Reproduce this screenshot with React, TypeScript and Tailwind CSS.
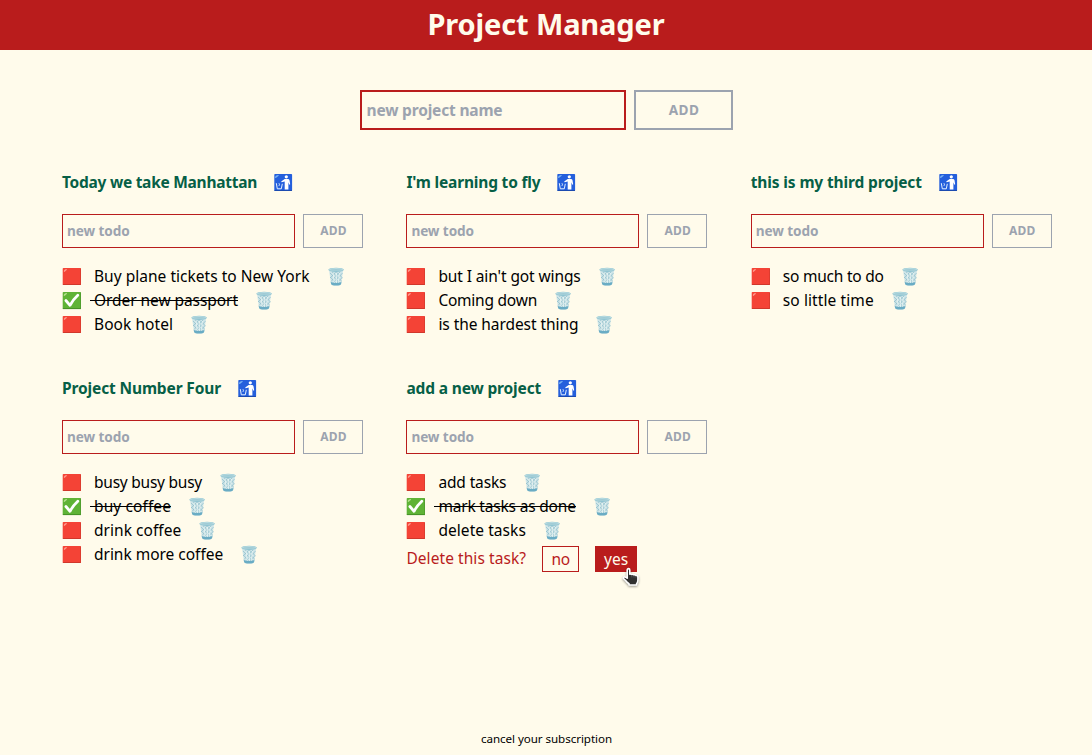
import { useLayoutEffect, useRef } from "react";

type Task = { text: string; width: number; done?: boolean };
type Project = { name: string; width: number; tasks: Task[]; confirm?: boolean };

const projects: Project[] = [
  {
    name: "Today we take Manhattan",
    width: 195,
    tasks: [
      { text: "Buy plane tickets to New York", width: 215.5 },
      { text: "Order new passport", width: 144, done: true },
      { text: "Book hotel", width: 79 },
    ],
  },
  {
    name: "I'm learning to fly",
    width: 134.2,
    tasks: [
      { text: "but I ain't got wings", width: 142.3 },
      { text: "Coming down", width: 98.6 },
      { text: "is the hardest thing", width: 140 },
    ],
  },
  {
    name: "this is my third project",
    width: 171,
    tasks: [
      { text: "so much to do", width: 101 },
      { text: "so little time", width: 91 },
    ],
  },
  {
    name: "Project Number Four",
    width: 159,
    tasks: [
      { text: "busy busy busy", width: 108 },
      { text: "buy coffee", width: 77, done: true },
      { text: "drink coffee", width: 87.3 },
      { text: "drink more coffee", width: 129.2 },
    ],
  },
  {
    name: "add a new project",
    width: 134.7,
    confirm: true,
    tasks: [
      { text: "add tasks", width: 68 },
      { text: "mark tasks as done", width: 137.3, done: true },
      { text: "delete tasks", width: 87.5 },
    ],
  },
];

/** Text whose tracking is adjusted so that it spans the given width. */
function Fit({ text, width, className = "" }: { text: string; width: number; className?: string }) {
  const ref = useRef<HTMLSpanElement>(null);
  useLayoutEffect(() => {
    const el = ref.current;
    if (!el) return;
    el.style.letterSpacing = "0px";
    const natural = el.getBoundingClientRect().width;
    el.style.letterSpacing = `${(width - natural) / text.length}px`;
  }, [text, width]);
  return (
    <span ref={ref} className={`inline-block whitespace-pre ${className}`}>
      {text}
    </span>
  );
}

function RedSquare() {
  return (
    <svg width="20" height="20" viewBox="0 0 20 20" className="mt-0.5 shrink-0">
      <rect x=".7" y="1" width="18.3" height="17" rx=".8" fill="#f44336" />
      <path d="M1 17.2H19V17.6Q19 18.1 18.4 18.1H1.4Q.8 18.1.8 17.6Z" fill="#c33529" />
      <path d="M18.2 1.5H19V17.8H18.2Z" fill="#d73b2f" />
      <path d="M1.8 4.6Q1.9 2.2 4.6 2.1L4.9 2.8 2.5 5Z" fill="#ff9a8c" />
    </svg>
  );
}

function CheckBox() {
  return (
    <svg width="20" height="20" viewBox="0 0 20 20" className="mt-0.5 shrink-0">
      <rect x=".7" y="1" width="18.3" height="17" rx=".8" fill="#5fb336" />
      <path d="M.8 17.2H19V18.1H.8Z" fill="#418b23" />
      <path d="M18.3 1.5H19V17.8H18.3Z" fill="#4b982b" />
      <path d="M1.7 4.8Q1.8 2.2 4.8 2.1L5 2.8 2.5 5Z" fill="#b5df8e" />
      <path d="M3.9 9.5 8 14.3Q10.6 9 15.8 4.2" fill="none" stroke="#fff" strokeWidth="2.8" strokeLinejoin="round" strokeLinecap="round" />
    </svg>
  );
}

function Litter() {
  return (
    <svg width="19" height="20" viewBox="0 0 19 20" className="mt-0.5 shrink-0">
      <rect x=".3" y="1" width="17.8" height="17" rx=".8" fill="#245fdc" />
      <path d="M.4 17.2H18V18H.4Z" fill="#1a45a5" />
      <path d="M1 4.8Q1.2 2.1 4.5 2L4.7 2.8 1.9 5Z" fill="#79b3f4" />
      <circle cx="12.3" cy="3.8" r="1.6" fill="#fff" />
      <path d="M10.7 5.9H13.9Q15.2 5.9 15.5 7.3L16.2 11.3 15.3 11.7 14.4 9.3V16.6H10.7V8.4L7.6 9.3 7.2 8.4Z" fill="#fff" />
      <path d="M2.3 10.2 3.3 15.8H7.3L8.3 10.8M5 10.3Q5.9 11.4 5 12.8" fill="none" stroke="#e6f1ff" strokeWidth="1" />
    </svg>
  );
}

function Trash() {
  return (
    <svg width="17" height="20" viewBox="0 0 17 20" className="mt-0.5 shrink-0">
      <path d="M1.1 3.8 3 16.7Q3.3 18.5 8.1 18.5T13.1 16.7L15.1 3.8Z" fill="#cfe5e8" />
      <path d="M2 6 12.5 17M2.2 10 9.5 17.5M4 4.8 14 14.5M8 4.8 14.6 11M14.6 6 4 17M14.2 10.5 7.8 17M12.2 4.8 3 14.5M8 4.8 2.3 10.8" stroke="#86b9c8" strokeWidth=".65" />
      <path d="M5.2 6 6.1 16M8.3 6V16M11.4 6 10.5 16" stroke="#edf7f5" strokeWidth=".8" />
      <path d="M2.7 15Q8 17.2 13.5 15L13.1 16.9Q12.6 18.5 8.1 18.5T3.1 16.9Z" fill="#6aacc4" />
      <ellipse cx="8.1" cy="2.8" rx="7.8" ry="2.1" fill="#8fc4d1" />
      <ellipse cx="8.1" cy="2.4" rx="7.2" ry="1.4" fill="#b9dce1" />
      <ellipse cx="8.1" cy="2.9" rx="5.8" ry=".9" fill="#a0cbd5" />
    </svg>
  );
}

function Hand() {
  return (
    <svg width="18" height="22" viewBox="0 0 18 22" className="pointer-events-none absolute left-[27px] top-[21px] z-10 drop-shadow-[0_1px_1px_rgba(0,0,0,0.4)]">
      <path
        d="M5.2 3Q5.2 1.6 6.5 1.6T7.8 3V7.2Q8.8 6.6 9.8 7.5 11 6.9 12 7.9 13.1 7.4 14 8.5 15.9 8.3 15.9 10.3V13.2Q15.8 15.3 14.6 16.8V18H7V16.8Q5 15.6 3.8 13.8L1.5 11.5Q1 10.3 2.2 9.9 3.3 9.6 5.2 11.2Z"
        fill="#303030"
        stroke="#fff"
        strokeWidth="1.6"
        strokeLinejoin="round"
      />
      <path d="M9.8 8V10.4M12 8.4V10.6M14 8.9V10.8" stroke="#777" strokeWidth=".5" />
    </svg>
  );
}

function TaskRow({ task }: { task: Task }) {
  return (
    <li className="flex h-6 items-center">
      {task.done ? <CheckBox /> : <RedSquare />}
      <span className={`ml-2 flex pr-[18px] text-[15.5px] leading-6 text-black ${task.done ? "relative" : ""}`}>
        <span className="w-1" />
        <Fit text={task.text} width={task.width} />
        {task.done && <span className="absolute left-0 right-[18px] top-[12px] h-px bg-black" />}
      </span>
      <Trash />
    </li>
  );
}

function ProjectCard({ project }: { project: Project }) {
  return (
    <section className="w-[301px]">
      <h2 className="flex h-6 items-center gap-[17px] text-[15.5px] font-bold text-[#065f46]">
        <Fit text={project.name} width={project.width} className="leading-6" />
        <Litter />
      </h2>
      <form className="mt-5 flex gap-2">
        <input
          placeholder="new todo"
          className="h-[34px] w-[233px] border border-[#b91c1c] bg-transparent px-1 pb-0.5 text-[13.6px] font-bold tracking-[-0.1px] outline-none placeholder:text-[#9ca3af]"
        />
        <button type="button" className="h-[34px] w-[60.3px] border border-[#9ca3af] pl-px text-xs font-bold text-[#9ca3af]">
          <Fit text="ADD" width={26.5} />
        </button>
      </form>
      <ul className="mt-4">
        {project.tasks.map((task) => (
          <TaskRow key={task.text} task={task} />
        ))}
      </ul>
      {project.confirm && (
        <div className="mt-1 flex h-[26px] items-center gap-4 text-[15.5px] leading-6 text-[#b91c1c]">
          <Fit text="Delete this task?" width={119.7} className="pb-0.5" />
          <button type="button" className="flex h-[26px] w-[37px] items-center justify-center border border-[#b91c1c]">
            <Fit text="no" width={18} />
          </button>
          <button type="button" className="relative flex h-[26px] w-[42px] items-center justify-center bg-[#b91c1c] text-[#fffbeb]">
            <Fit text="yes" width={24} />
            <Hand />
          </button>
        </div>
      )}
    </section>
  );
}

export default function App() {
  return (
    <div className="flex h-[755px] flex-col overflow-hidden bg-[#fffbeb] font-['Noto_Sans',sans-serif]">
      <header className="flex h-[50px] items-center justify-center bg-[#b91c1c]">
        <h1 className="pb-0.5 text-[29px] font-bold leading-[48px] text-[#fffbeb]">
          <Fit text="Project Manager" width={237} />
        </h1>
      </header>
      <form className="mt-10 flex justify-center gap-2">
        <input
          placeholder="new project name"
          className="h-10 w-[266px] border-2 border-[#b91c1c] bg-transparent pl-[5px] text-[15.5px] font-bold tracking-[-0.18px] outline-none placeholder:text-[#9ca3af]"
        />
        <button type="button" className="h-10 w-[99px] border-2 border-[#9ca3af] pl-0.5 text-[13.6px] font-bold text-[#9ca3af]">
          <Fit text="ADD" width={30.5} />
        </button>
      </form>
      <main className="mt-10 grid grid-cols-[344.4px_344.4px_301px] gap-y-10 pl-[62px]">
        {projects.map((project) => (
          <ProjectCard key={project.name} project={project} />
        ))}
      </main>
      <footer className="mt-auto flex h-[33px] items-center justify-center pl-px text-[11.6px] text-black">
        <Fit text="cancel your subscription" width={131} />
      </footer>
    </div>
  );
}
